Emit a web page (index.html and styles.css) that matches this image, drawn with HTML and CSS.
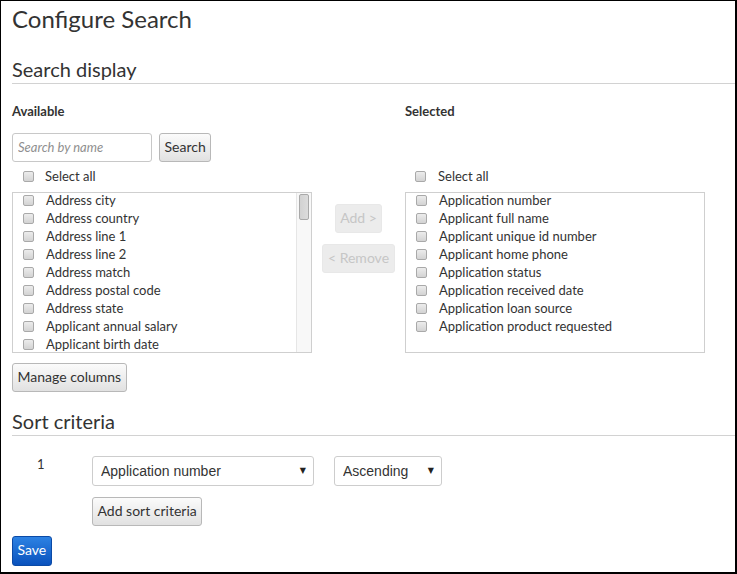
FILE: index.html
```html
<!DOCTYPE html>
<html lang="en">
<head>
<meta charset="utf-8">
<title>Configure Search</title>
<link rel="stylesheet" href="styles.css">
</head>
<body>
<div class="page">
  <h1 class="title">Configure Search</h1>

  <h2 class="section">Search display</h2>

  <div class="picker">
    <div class="col-label label-avail">Available</div>
    <div class="col-label label-sel">Selected</div>

    <div class="search-row">
      <input class="search-input" type="text" placeholder="Search by name">
      <button class="btn" type="button">Search</button>
    </div>

    <label class="select-all sa-left"><input type="checkbox"><span>Select all</span></label>
    <label class="select-all sa-right"><input type="checkbox"><span>Select all</span></label>

    <div class="list list-left">
      <ul class="list-items">
        <li><label><input type="checkbox"><span>Address city</span></label></li>
        <li><label><input type="checkbox"><span>Address country</span></label></li>
        <li><label><input type="checkbox"><span>Address line 1</span></label></li>
        <li><label><input type="checkbox"><span>Address line 2</span></label></li>
        <li><label><input type="checkbox"><span>Address match</span></label></li>
        <li><label><input type="checkbox"><span>Address postal code</span></label></li>
        <li><label><input type="checkbox"><span>Address state</span></label></li>
        <li><label><input type="checkbox"><span>Applicant annual salary</span></label></li>
        <li><label><input type="checkbox"><span>Applicant birth date</span></label></li>
      </ul>
      <div class="scrollbar" aria-hidden="true"><div class="scroll-thumb"></div></div>
    </div>

    <div class="mover">
      <button class="btn btn-disabled" type="button" disabled>Add &gt;</button>
      <button class="btn btn-disabled" type="button" disabled>&lt; Remove</button>
    </div>

    <div class="list list-right">
      <ul class="list-items">
        <li><label><input type="checkbox"><span>Application number</span></label></li>
        <li><label><input type="checkbox"><span>Applicant full name</span></label></li>
        <li><label><input type="checkbox"><span>Applicant unique id number</span></label></li>
        <li><label><input type="checkbox"><span>Applicant home phone</span></label></li>
        <li><label><input type="checkbox"><span>Application status</span></label></li>
        <li><label><input type="checkbox"><span>Application received date</span></label></li>
        <li><label><input type="checkbox"><span>Application loan source</span></label></li>
        <li><label><input type="checkbox"><span>Application product requested</span></label></li>
      </ul>
    </div>
  </div>

  <div class="actions manage">
    <button class="btn" type="button">Manage columns</button>
  </div>

  <h2 class="section sort-title">Sort criteria</h2>

  <div class="sort-grid">
    <div class="sort-index">1</div>
    <div class="sort-fields">
      <div class="sort-selects">
        <span class="select-wrap">
          <select class="select select-field">
            <option>Application number</option>
          </select>
        </span>
        <span class="select-wrap">
          <select class="select select-order">
            <option>Ascending</option>
            <option>Descending</option>
          </select>
        </span>
      </div>
      <div class="actions add-sort">
        <button class="btn" type="button">Add sort criteria</button>
      </div>
    </div>
  </div>

  <div class="actions save-row">
    <button class="btn btn-primary" type="button">Save</button>
  </div>
</div>
</body>
</html>
```

FILE: styles.css
```css
html, body {
  margin: 0;
  padding: 0;
  background: #fff;
}

body {
  font-family: Lato, "Liberation Sans", Arial, sans-serif;
  color: #333;
}

.page {
  box-sizing: border-box;
  width: 737px;
  height: 574px;
  border: 1px solid #000;
  border-right-width: 2px;
  border-bottom-width: 2px;
  padding-left: 11px;
  background: #fff;
  overflow: hidden;
}

.title {
  margin: 0;
  padding-top: 3px;
  font-size: 24px;
  line-height: 30px;
  font-weight: 400;
  color: #333;
}

.section {
  margin: 23px 0 0;
  font-size: 20px;
  line-height: 24px;
  font-weight: 400;
  color: #333;
  padding-bottom: 2px;
  border-bottom: 1px solid #d2d2d2;
}

.sort-title {
  margin-top: 17px;
}

/* picker */
.picker {
  display: grid;
  grid-template-columns: 300px 93px 300px;
  margin-top: 18px;
}

.col-label {
  grid-row: 1;
  font-weight: 700;
  font-size: 13px;
  line-height: 18px;
}

.label-avail { grid-column: 1; }
.label-sel { grid-column: 3; }

.search-row {
  grid-column: 1;
  grid-row: 2;
  display: flex;
  gap: 7px;
  margin-top: 13px;
}

.search-input {
  box-sizing: border-box;
  width: 140px;
  height: 29px;
  margin: 0;
  border: 1px solid #c8c8c8;
  border-radius: 3px;
  padding: 0 5px 2px;
  font-family: Lato, sans-serif;
  font-size: 13px;
  font-style: italic;
  color: #333;
  background: #fff;
}

.search-input::placeholder {
  color: #8f8f8f;
  font-style: italic;
}

.btn {
  box-sizing: border-box;
  height: 29px;
  margin: 0;
  padding: 0 4.5px 2px;
  border: 1px solid #b8b8b8;
  border-radius: 3px;
  background: linear-gradient(#fbfbfb, #e1e1e1);
  font-family: Lato, sans-serif;
  font-size: 14px;
  line-height: 16px;
  color: #333;
  cursor: pointer;
}

.btn-disabled {
  background: #ececec;
  border-color: #e8e8e8;
  color: #c6c6c6;
  cursor: default;
}

.btn-primary {
  height: 30px;
  background: linear-gradient(#2d82e3, #0a52bd);
  border-color: #0b4aa6;
  color: #fff;
}

.select-all {
  grid-row: 3;
  margin-top: 5px;
  display: flex;
  align-items: center;
  gap: 11px;
  padding-left: 11px;
  font-size: 13px;
  line-height: 18px;
}

.sa-left { grid-column: 1; }
.sa-right { grid-column: 3; padding-left: 10px; gap: 12px; }

input[type="checkbox"] {
  appearance: none;
  -webkit-appearance: none;
  box-sizing: border-box;
  width: 11px;
  height: 11px;
  margin: 0;
  flex: none;
  border: 1px solid #a9a9a9;
  border-radius: 2px;
  background: linear-gradient(#ececec, #d3d3d3);
}

.list {
  grid-row: 4;
  position: relative;
  box-sizing: border-box;
  height: 161px;
  margin-top: 7px;
  border: 1px solid #cfcfcf;
  overflow: hidden;
  background: #fff;
}

.list-left { grid-column: 1; }
.list-right { grid-column: 3; }

.list-items {
  margin: 0;
  padding: 0;
  list-style: none;
}

.list-items label {
  display: flex;
  align-items: center;
  gap: 12px;
  padding: 0 0 4px 10px;
  font-size: 13px;
  line-height: 14px;
  white-space: nowrap;
}

.scrollbar {
  position: absolute;
  top: 0;
  right: 0;
  bottom: 0;
  width: 15px;
  box-sizing: border-box;
  background: #f8f8f8;
  border-left: 1px solid #e6e6e6;
  padding: 1px 2px 0 1px;
}

.scroll-thumb {
  box-sizing: border-box;
  height: 26px;
  margin-left: 1px;
  border: 1px solid #a9a9a9;
  border-radius: 2px;
  background: linear-gradient(90deg, #d2d2d2, #dcdcdc);
}

.mover {
  grid-column: 2;
  grid-row: 4;
  margin-top: 7px;
  padding-top: 12px;
  display: flex;
  flex-direction: column;
  align-items: center;
  gap: 11px;
}

.actions {
  display: flex;
}

.manage {
  margin-top: 10px;
}

/* sort */
.sort-grid {
  display: flex;
  margin-top: 20px;
}

.sort-index {
  box-sizing: border-box;
  width: 80px;
  padding-left: 25px;
  padding-top: 1px;
  font-size: 13px;
  line-height: 14px;
}

.sort-fields {
  display: flex;
  flex-direction: column;
}

.sort-selects {
  display: flex;
  gap: 20px;
}

.select-wrap {
  position: relative;
  display: block;
}

.select-wrap::after {
  content: "\25BC";
  position: absolute;
  right: 8px;
  top: 50%;
  transform: translateY(-50%);
  font-family: "DejaVu Sans", sans-serif;
  font-size: 8px;
  line-height: 1;
  color: #222;
  pointer-events: none;
}

.select {
  appearance: none;
  -webkit-appearance: none;
  box-sizing: border-box;
  height: 30px;
  margin: 0;
  padding: 0 0 0 8px;
  border: 1px solid #cdcdcd;
  border-radius: 3px;
  background: #fff;
  font-family: "Liberation Sans", Arial, sans-serif;
  font-size: 14px;
  color: #333;
}

.select-field { width: 222px; }
.select-order { width: 108px; }

.add-sort {
  margin-top: 11px;
}

.save-row {
  margin-top: 10px;
}
```
